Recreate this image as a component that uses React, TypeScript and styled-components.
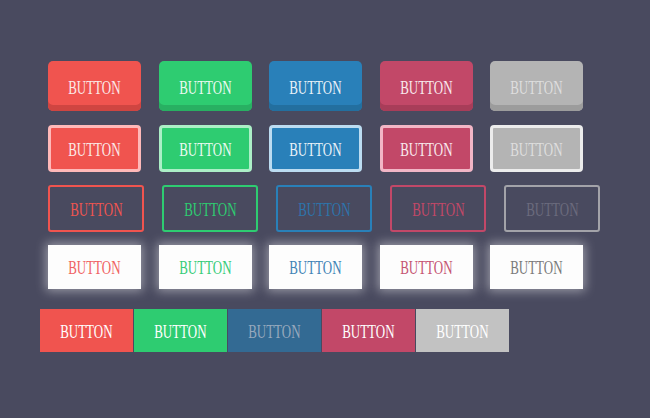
import React from "react";
import styled, { createGlobalStyle, css } from "styled-components";

const Global = createGlobalStyle`
  html, body { margin: 0; padding: 0; background: #494a5f; }
  body { width: 650px; height: 418px; overflow: hidden; font-family: "Liberation Serif", serif; }
`;

type Tone = "red" | "green" | "blue" | "pink" | "gray";

const palette: Record<Tone, { base: string; dark: string; light: string; text: string; outlineText: string; whiteText: string }> = {
  red: { base: "#f0544f", dark: "#cf4541", light: "#ffb9b9", text: "#fbe9e8", outlineText: "#ef5550", whiteText: "#f06262" },
  green: { base: "#2ecc71", dark: "#28b062", light: "#acefc7", text: "#eafaf0", outlineText: "#2ecc71", whiteText: "#36cc78" },
  blue: { base: "#2980b9", dark: "#236f9f", light: "#bcdcf1", text: "#e8f1f8", outlineText: "#2d74ab", whiteText: "#3f83b6" },
  pink: { base: "#c24868", dark: "#a83d59", light: "#f2b6c6", text: "#f9e9ed", outlineText: "#c24868", whiteText: "#c55472" },
  gray: { base: "#b4b4b4", dark: "#9c9c9c", light: "#ececec", text: "#dedede", outlineText: "#6b6b7d", whiteText: "#7a7a7a" },
};

const tones: Tone[] = ["red", "green", "blue", "pink", "gray"];

const Page = styled.div`
  display: flex;
  flex-direction: column;
  padding: 61px 0 0 48px;
`;

const Row = styled.div<{ $cols: number; $gap: number; $mb: number }>`
  display: grid;
  grid-template-columns: repeat(5, ${(p) => p.$cols}px);
  column-gap: ${(p) => p.$gap}px;
  margin-bottom: ${(p) => p.$mb}px;
`;

const FlatRow = styled.div`
  display: flex;
  gap: 1px;
  margin-left: -8px;
`;

const base = css`
  display: flex;
  align-items: center;
  justify-content: center;
  box-sizing: border-box;
  font-family: "Liberation Serif", serif;
  font-size: 18px;
  cursor: pointer;
`;

const Label = styled.span`
  display: inline-block;
  transform: scaleX(0.72);
  padding-top: 3px;
`;

const Raised = styled.div<{ $tone: Tone }>`
  ${base}
  height: 50px;
  padding-top: 2px;
  border-radius: 5px;
  background: ${(p) => palette[p.$tone].base};
  box-shadow: inset 0 -6px 0 ${(p) => palette[p.$tone].dark};
  color: ${(p) => palette[p.$tone].text};
`;

const Framed = styled.div<{ $tone: Tone }>`
  ${base}
  height: 47px;
  border-radius: 4px;
  background: ${(p) => palette[p.$tone].base};
  border: 3px solid ${(p) => palette[p.$tone].light};
  color: ${(p) => palette[p.$tone].text};
`;

const Outline = styled.div<{ $tone: Tone }>`
  ${base}
  height: 47px;
  border-radius: 3px;
  border: 2px solid ${(p) => (p.$tone === "gray" ? "#a3a3a9" : palette[p.$tone].base)};
  color: ${(p) => palette[p.$tone].outlineText};
`;

const Glow = styled.div<{ $tone: Tone }>`
  ${base}
  height: 44px;
  background: #fdfdfd;
  box-shadow: 0 0 10px 2px rgba(255, 255, 255, 0.45);
  color: ${(p) => palette[p.$tone].whiteText};
`;

const flatBg: Record<Tone, string> = {
  red: "#f0544f",
  green: "#2ecc71",
  blue: "#336a93",
  pink: "#c24868",
  gray: "#c2c2c2",
};

const Flat = styled.div<{ $tone: Tone }>`
  ${base}
  width: 93px;
  height: 43px;
  background: ${(p) => flatBg[p.$tone]};
  color: ${(p) => (p.$tone === "blue" ? "#97a9bd" : "#ffffff")};
`;

export default function App() {
  return (
    <>
      <Global />
      <Page>
        <Row $cols={93} $gap={17.5} $mb={14}>
          {tones.map((t) => (
            <Raised key={t} $tone={t}><Label>BUTTON</Label></Raised>
          ))}
        </Row>
        <Row $cols={93} $gap={17.5} $mb={13}>
          {tones.map((t) => (
            <Framed key={t} $tone={t}><Label>BUTTON</Label></Framed>
          ))}
        </Row>
        <Row $cols={96} $gap={18} $mb={13}>
          {tones.map((t) => (
            <Outline key={t} $tone={t}><Label>BUTTON</Label></Outline>
          ))}
        </Row>
        <Row $cols={93} $gap={17.5} $mb={20}>
          {tones.map((t) => (
            <Glow key={t} $tone={t}><Label>BUTTON</Label></Glow>
          ))}
        </Row>
        <FlatRow>
          {tones.map((t) => (
            <Flat key={t} $tone={t}><Label>BUTTON</Label></Flat>
          ))}
        </FlatRow>
      </Page>
    </>
  );
}
